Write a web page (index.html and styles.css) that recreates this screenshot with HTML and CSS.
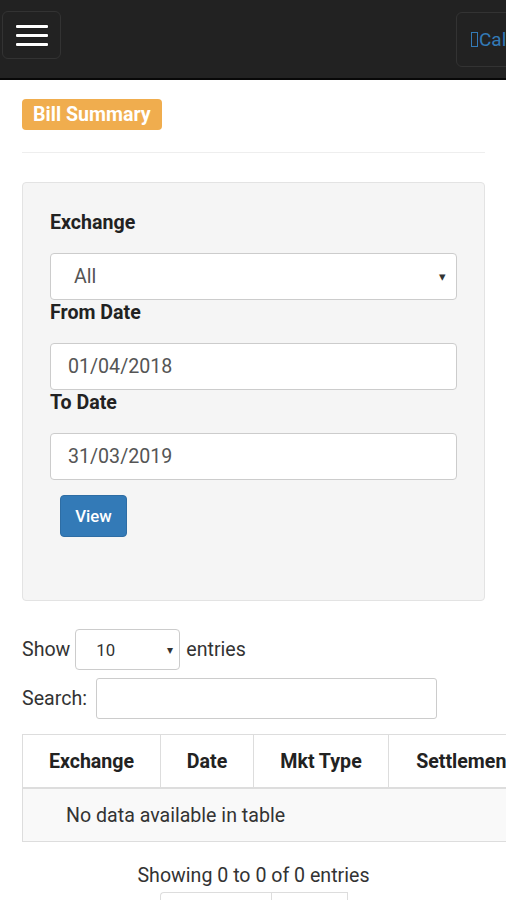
FILE: index.html
```html
<!DOCTYPE html>
<html lang="en">
<head>
<meta charset="utf-8">
<title>Bill Summary</title>
<link rel="stylesheet" href="styles.css">
</head>
<body>
<nav class="navbar">
  <button class="menu-btn" aria-label="Menu">
    <span class="bar"></span><span class="bar"></span><span class="bar"></span>
  </button>
  <div class="call-btn"><span class="glyph"></span>Call Us</div>
</nav>
<main class="page">
  <span class="badge">Bill Summary</span>
  <hr class="rule">
  <section class="well">
    <label class="field-label">Exchange</label>
    <div class="control select-control"><span class="val-all">All</span><span class="caret">&#9662;</span></div>
    <label class="field-label">From Date</label>
    <div class="control date-control">01/04/2018</div>
    <label class="field-label">To Date</label>
    <div class="control date-control">31/03/2019</div>
    <button class="btn-view">View</button>
  </section>
  <div class="dt-row">
    <span>Show</span>
    <div class="len-select"><span>10</span><span class="caret small">&#9662;</span></div>
    <span>entries</span>
  </div>
  <div class="dt-row search-row">
    <span>Search:</span>
    <div class="search-input"></div>
  </div>
  <div class="table-wrap">
    <table class="data">
      <colgroup>
        <col class="c1"><col class="c2"><col class="c3"><col class="c4">
      </colgroup>
      <thead>
        <tr>
          <th>Exchange</th>
          <th>Date</th>
          <th>Mkt Type</th>
          <th>Settlement No</th>
        </tr>
      </thead>
      <tbody>
        <tr><td colspan="4" class="empty">No data available in table</td></tr>
      </tbody>
    </table>
  </div>
  <div class="info">Showing 0 to 0 of 0 entries</div>
  <div class="pager">
    <span class="pg first">Previous</span><span class="pg">Next</span>
  </div>
</main>
</body>
</html>
```

FILE: styles.css
```css
html, body {
  margin: 0;
  padding: 0;
}
body {
  font-family: Roboto, "Liberation Sans", Arial, sans-serif;
  font-size: 19.6px;
  color: #333;
  background: #fff;
  overflow-x: hidden;
  width: 506px;
}
.navbar {
  height: 78px;
  background: #222;
  border-bottom: 2px solid #080808;
  display: flex;
  align-items: flex-start;
  justify-content: space-between;
  overflow: hidden;
}
.menu-btn {
  margin: 11px 0 0 2px;
  width: 59px;
  height: 48px;
  background: transparent;
  border: 1px solid #333;
  border-radius: 6px;
  padding: 0;
  display: flex;
  flex-direction: column;
  align-items: center;
  justify-content: center;
  gap: 6px;
}
.menu-btn .bar {
  display: block;
  width: 32px;
  height: 3px;
  background: #fff;
  border-radius: 1px;
  box-shadow: 0 0 1px #000;
}
.call-btn {
  margin-top: 12px;
  margin-right: -60px;
  height: 55px;
  width: 110px;
  flex: none;
  border: 1px solid #333;
  border-radius: 6px;
  box-sizing: border-box;
  padding-left: 14px;
  display: flex;
  align-items: center;
  color: #337ab7;
  font-size: 19px;
  white-space: nowrap;
}
.call-btn .glyph {
  display: inline-block;
  width: 5px;
  height: 13px;
  border: 1px solid #337ab7;
  margin-right: 1px;
}
.page {
  padding: 19px 21px 0 22px;
}
.badge {
  display: inline-block;
  background: #f0ad4e;
  color: #fff;
  font-weight: 700;
  font-size: 19.6px;
  line-height: 31px;
  height: 31px;
  padding: 0 11px;
  border-radius: 4px;
}
.rule {
  margin: 22px 0 29px;
  border: 0;
  border-top: 1px solid #eee;
}
.well {
  background: #f5f5f5;
  border: 1px solid #e3e3e3;
  border-radius: 4px;
  padding: 28px 27px 63px;
  display: flex;
  flex-direction: column;
  align-items: stretch;
}
.field-label {
  display: block;
  font-weight: 700;
  line-height: 24px;
  margin-bottom: 18px;
  color: #222;
}
.control {
  height: 47px;
  box-sizing: border-box;
  background: #fff;
  border: 1px solid #ccc;
  border-radius: 4px;
  margin-bottom: 1px;
  display: flex;
  align-items: center;
  color: #555;
}
.select-control {
  padding: 0 10px 0 23px;
  justify-content: space-between;
}
.date-control {
  padding-left: 17px;
}
.caret {
  font-size: 13px;
  color: #333;
}
.btn-view {
  align-self: flex-start;
  margin: 14px 0 0 10px;
  width: 67px;
  height: 42px;
  background: #337ab7;
  border: 1px solid #2e6da4;
  border-radius: 4px;
  color: #fff;
  font-family: Roboto, "Liberation Sans", Arial, sans-serif;
  font-size: 16.8px;
  font-weight: 500;
  padding: 0;
}
.dt-row {
  display: flex;
  align-items: center;
  margin-top: 28px;
}
.len-select {
  margin: 0 6px 0 5px;
  width: 105px;
  height: 41px;
  box-sizing: border-box;
  border: 1px solid #ccc;
  border-radius: 4px;
  display: flex;
  align-items: center;
  justify-content: space-between;
  padding: 0 6px 0 20px;
  font-size: 16.8px;
  color: #333;
}
.caret.small {
  font-size: 12px;
}
.search-row {
  margin-top: 8px;
}
.search-input {
  margin-left: 9px;
  width: 341px;
  height: 41px;
  box-sizing: border-box;
  border: 1px solid #ccc;
  border-radius: 3px;
}
.table-wrap {
  margin-top: 15px;
  margin-right: -21px;
  overflow: hidden;
}
.data {
  border-collapse: collapse;
  table-layout: fixed;
  width: 548px;
}
.c1 { width: 138px; }
.c2 { width: 93px; }
.c3 { width: 135px; }
.c4 { width: 182px; }
.data th {
  font-weight: 700;
  height: 52px;
  padding: 0;
  text-align: center;
  border: 1px solid #ddd;
  border-bottom: 2px solid #ddd;
  color: #222;
  white-space: nowrap;
  overflow: hidden;
}
.data td.empty {
  background: #f9f9f9;
  height: 52px;
  border: 1px solid #ddd;
  padding: 0 0 0 43px;
  text-align: left;
}
.info {
  margin-top: 23px;
  text-align: center;
  line-height: 22px;
}
.pager {
  margin-top: 5px;
  display: flex;
  justify-content: flex-start;
  padding-left: 138px;
}
.pg {
  display: inline-block;
  height: 40px;
  width: 77px;
  border: 1px solid #ddd;
  color: transparent;
  box-sizing: border-box;
}
.pg.first {
  width: 111px;
  border-radius: 4px 0 0 4px;
  border-right: 0;
}
```
